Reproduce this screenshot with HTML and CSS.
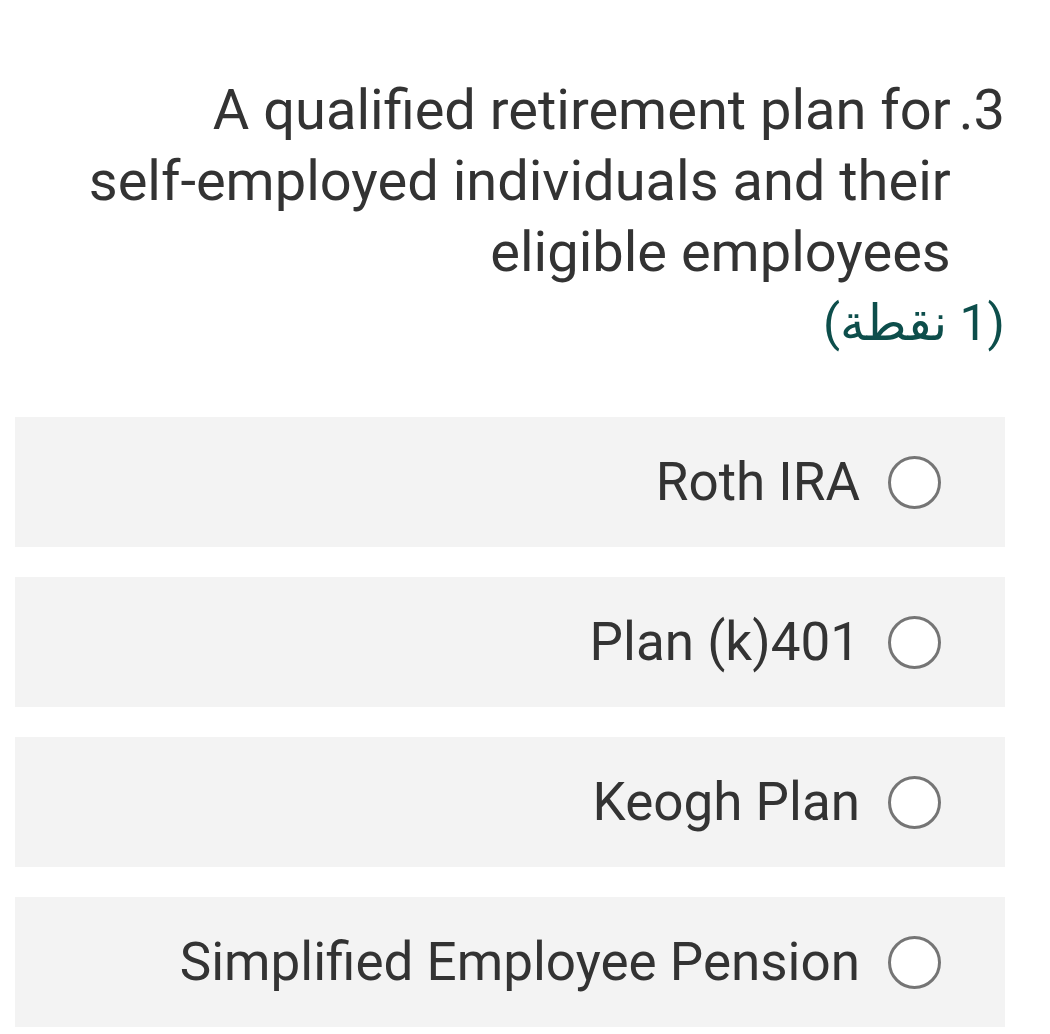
FILE: index.html
```html
<!DOCTYPE html>
<html lang="ar" dir="rtl">
<head>
<meta charset="utf-8">
<link rel="stylesheet" href="styles.css">
</head>
<body>
<div class="question">
  <div class="question-head">
    <span class="q-num">3.</span>
    <span class="q-title" dir="ltr">A qualified retirement plan for <span class="nowrap">self-employed</span> individuals and their eligible employees</span>
  </div>
  <div class="q-points">(1 نقطة)</div>
  <div class="choices">
    <label class="choice"><span class="radio"></span><span class="choice-text">Roth IRA</span></label>
    <label class="choice"><span class="radio"></span><span class="choice-text">401(k) Plan</span></label>
    <label class="choice"><span class="radio"></span><span class="choice-text">Keogh Plan</span></label>
    <label class="choice"><span class="radio"></span><span class="choice-text">Simplified Employee Pension</span></label>
  </div>
</div>
</body>
</html>
```

FILE: styles.css
```css
html, body {
  margin: 0;
  padding: 0;
  background: #ffffff;
}

body {
  font-family: Roboto, "DejaVu Sans", sans-serif;
  color: #333333;
  padding: 0 45px 0 15px;
}

.question {
  padding-top: 75px;
}

.question-head {
  display: flex;
  flex-direction: row;
  gap: 8px;
  font-size: 56px;
  line-height: 71px;
}

.q-num {
  flex: none;
}

.q-title {
  text-align: right;
  padding-left: 58px;
}

.nowrap {
  white-space: nowrap;
}

.q-points {
  font-size: 50px;
  line-height: 71px;
  color: #0d4e4b;
}

.choices {
  margin-top: 58px;
  display: flex;
  flex-direction: column;
  gap: 30px;
}

.choice {
  display: flex;
  align-items: center;
  gap: 28px;
  height: 130px;
  background: #f3f3f3;
  padding-right: 64px;
}

.radio {
  flex: none;
  width: 47px;
  height: 47px;
  border: 3px solid #757575;
  border-radius: 50%;
  background: #ffffff;
}

.choice-text {
  font-size: 53px;
  color: #333333;
}
```
